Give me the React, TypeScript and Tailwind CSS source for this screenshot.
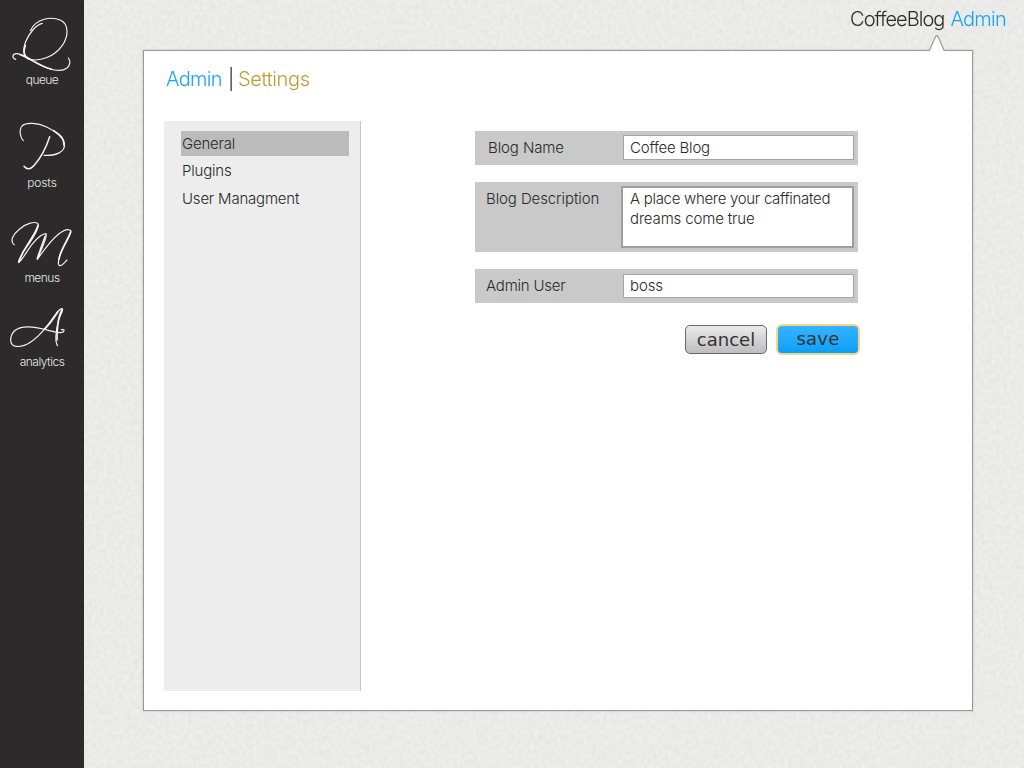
import type { ReactNode } from 'react';

type NavItem = { label: string; gap: string; tracking: string; viewBox: string; height: string; glyph: ReactNode };

const navItems: NavItem[] = [
  {
    label: 'queue', gap: '', tracking: 'tracking-[-0.6px]', viewBox: '0 0 252 219', height: 'h-[73px]',
    glyph: (
      <>
        <path strokeWidth="3.5" d="M127 70 C108 74 88 99 77 125 C68 147 69 171 88 177 C119 187 164 169 187 136 C206 109 207 73 182 61 C154 48 108 55 91 92" />
        <path strokeWidth="5" d="M76 137 C68 155 72 171 87 177" />
        <path strokeWidth="3.5" d="M47 178 C34 174 37 159 52 161 C78 165 99 186 132 200 C158 211 186 216 201 204 C212 195 211 182 205 174" />
        <path strokeWidth="5" d="M61 164 C91 175 119 199 153 207" />
      </>
    ),
  },
  {
    label: 'posts', gap: 'mt-[23px]', tracking: 'tracking-[-0.1px]', viewBox: '0 0 252 198', height: 'h-[66px]',
    glyph: (
      <>
        <path strokeWidth="3.5" d="M70 92 C61 83 56 60 66 48 C78 36 113 38 140 51 C169 65 190 82 193 101 C197 126 168 138 132 136" />
        <path strokeWidth="5" d="M161 62 C184 77 193 87 192 105" />
        <path strokeWidth="4.5" d="M149 80 C139 111 124 141 104 164 C90 181 79 178 72 169" />
      </>
    ),
  },
  {
    label: 'menus', gap: 'mt-[15px]', tracking: 'tracking-[-0.5px]', viewBox: '0 0 252 198', height: 'h-[66px]',
    glyph: (
      <>
        <path strokeWidth="3.5" d="M43 119 C28 109 39 88 59 72 C79 54 105 48 114 56 C119 73 91 112 70 139 L56 173 C72 158 82 135 98 116 C112 99 128 86 138 86 C145 93 122 135 112 163 C129 139 151 106 177 86 C193 74 207 71 213 78 C211 96 186 129 180 151 C170 181 177 187 188 178 C194 173 197 169 201 165" />
        <path strokeWidth="5" d="M114 61 C112 80 65 139 56 170 M136 93 C129 113 119 138 112 161 M212 81 C204 103 178 142 177 163" />
      </>
    ),
  },
  {
    label: 'analytics', gap: 'mt-[10px]', tracking: 'tracking-[-0.5px]', viewBox: '0 0 252 180', height: 'h-[60px]',
    glyph: (
      <>
        <path strokeWidth="3.5" d="M173 152 C165 143 166 112 175 79 C181 58 191 47 187 41 C177 37 157 75 135 101 C108 133 76 158 48 154 C26 151 29 124 43 108 C67 86 121 99 148 107 C172 113 190 117 192 107 C193 102 187 103 184 105" />
        <path strokeWidth="5" d="M187 43 C174 63 171 93 171 135 M173 51 C160 72 146 90 133 103" />
      </>
    ),
  },
];

function Sidebar() {
  return (
    <nav className="relative flex w-[84px] shrink-0 flex-col bg-[#2c2a2b]">
      {navItems.map((item) => (
        <a key={item.label} className={`flex flex-col text-center ${item.gap}`}>
          <svg className={`w-[84px] ${item.height}`} viewBox={item.viewBox} fill="none" stroke="#f4f4f4" strokeLinecap="round" strokeLinejoin="round">
            {item.glyph}
          </svg>
          <span className={`h-[14px] text-[12px] leading-[14px] font-light text-[#e8e8e8] ${item.tracking}`}>{item.label}</span>
        </a>
      ))}
    </nav>
  );
}

function PaperTexture() {
  return (
    <svg className="absolute inset-0 h-full w-full" aria-hidden="true">
      <filter id="paper" x="0" y="0" width="100%" height="100%" colorInterpolationFilters="sRGB">
        <feTurbulence type="fractalNoise" baseFrequency="0.26 0.2" numOctaves="2" seed="8" />
        <feColorMatrix values="0.06 0 0 0 0.888  0.06 0 0 0 0.888  0.06 0 0 0 0.884  0 0 0 0 1" />
      </filter>
      <rect width="100%" height="100%" filter="url(#paper)" />
    </svg>
  );
}

export default function App() {
  return (
    <div className="relative flex h-[768px] w-[1024px] overflow-hidden bg-[#ebebea] font-['Inter','Liberation_Sans',sans-serif] font-light text-[#292929]">
      <PaperTexture />
      <Sidebar />
      <main className="relative flex flex-1 flex-col pr-[51px] pl-[59px]">
        <header className="-mr-[33px] flex h-[50px] shrink-0 justify-end pt-[7px] text-[20px] leading-[24px] whitespace-pre opacity-[0.99]">
          <span className="tracking-[-0.95px]">CoffeeBlog</span>
          <span className="ml-[6px] tracking-[-0.75px] text-[#12a5fb]">Admin</span>
        </header>
        <section className="relative flex h-[661px] w-[830px] flex-col border border-[#999] bg-white px-5 shadow-[0_0_2px_rgba(0,0,0,0.2)]">
          <svg className="absolute -top-[16px] left-[785px] h-[17px] w-[16px]" viewBox="0 0 16 17">
            <path d="M0.5 15.5 L6.6 1.6 Q7.8 -0.4 9 1.6 L15 15.5 V17 H0.5 Z" fill="#fff" />
            <path d="M0.3 15.6 L6.6 1.6 Q7.8 -0.4 9 1.6 L15.2 15.6" fill="none" stroke="#999" strokeWidth="1.2" />
          </svg>
          <h1 className="mt-[16px] ml-[2px] flex h-[24px] text-[20px] leading-[24px] whitespace-pre opacity-[0.99]">
            <span className="w-[58px] tracking-[-0.7px] text-[#12a5fb]">Admin</span>
            <span className="w-[14px] pl-[4px] text-[#222]">|</span>
            <span className="tracking-[-0.35px] text-[#c19c2e]">Settings</span>
          </h1>
          <div className="mt-[30px] flex">
            <aside className="flex h-[570px] w-[197px] flex-col border-r border-[#c6c6c6] bg-[#ededed] pt-[10px] pr-[11px] pl-[17px] text-[15px] tracking-[-0.2px]">
              <a className="h-[25px] bg-[#bbb] pl-px leading-[25px]">General</a>
              <a className="mt-[2px] h-[25px] pl-px leading-[25px]">Plugins</a>
              <a className="mt-[3px] h-[25px] pl-px leading-[25px]">User Managment</a>
            </aside>
            <form className="mt-[10px] ml-[114px] flex w-[384px] flex-col text-[15px] tracking-[-0.1px]">
              <div className="flex h-[34px] w-[383px] bg-[#c9c9c9] pt-[4px] pl-[13px]">
                <label className="w-[135px] leading-[26px]">Blog Name</label>
                <div className="h-[25px] w-[231px] border border-[#a5a5a5] bg-white pl-[6px] leading-[24px] tracking-[-0.2px]">Coffee Blog</div>
              </div>
              <div className="mt-[17px] flex h-[70px] w-[383px] bg-[#c9c9c9] pt-[4px] pl-[11px]">
                <label className="w-[135px] leading-[26px]">Blog Description</label>
                <div className="h-[62px] w-[233px] border-2 border-[#9e9e9e] bg-white pt-px pl-[7px] leading-[20px] whitespace-nowrap">
                  <p className="tracking-[-0.3px]">A place where your caffinated</p>
                  <p className="tracking-[-0.15px]">dreams come true</p>
                </div>
              </div>
              <div className="mt-[17px] flex h-[34px] w-[383px] bg-[#c9c9c9] pt-[5px] pl-[11px]">
                <label className="w-[137px] leading-[24px] tracking-[-0.2px]">Admin User</label>
                <div className="h-[24px] w-[231px] border border-[#a5a5a5] bg-white pl-[6px] leading-[22px]">boss</div>
              </div>
              <div className="-mr-px mt-[21px] flex justify-end gap-[9px] font-['DejaVu_Sans',sans-serif] text-[18px] font-normal tracking-normal text-[#333]">
                <button type="button" className="mt-px h-[29px] w-[82px] rounded-[5px] border border-[#686868] bg-linear-to-b from-[#ebebeb] to-[#bdbdbd] leading-[26px]">cancel</button>
                <button type="button" className="h-[31px] w-[84px] rounded-[6px] border-2 border-[#f5d782] bg-linear-to-b from-[#35b2ff] to-[#05a0fb] pb-[2px] leading-[24px] tracking-[0.2px]">save</button>
              </div>
            </form>
          </div>
        </section>
      </main>
    </div>
  );
}
